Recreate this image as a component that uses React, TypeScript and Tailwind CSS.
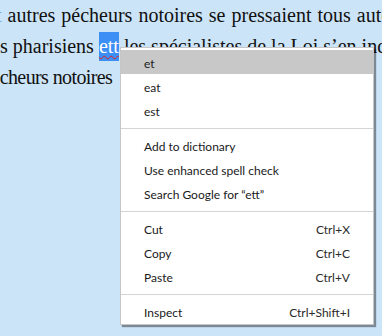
import React from "react";

const serif = { fontFamily: '"Liberation Serif", "Times New Roman", serif' };
const ui = { fontFamily: 'Lato, "Segoe UI", "Noto Sans", sans-serif' };

function Item({ label, shortcut, active }: { label: string; shortcut?: string; active?: boolean }) {
  return (
    <div
      className={`flex h-[24px] items-center justify-between px-[23px] pt-[3px] text-[12px] text-[#1a1a1a] ${
        active ? "bg-[#c8c8c8]" : ""
      }`}
    >
      <span>{label}</span>
      {shortcut && <span className="text-[#2a2a2a]">{shortcut}</span>}
    </div>
  );
}

function Sep() {
  return (
    <div className="flex h-[11px] items-center pt-[1px]">
      <div className="h-px w-full bg-[#d4d4d4]" />
    </div>
  );
}

export default function App() {
  return (
    <div className="relative h-[336px] w-[382px] overflow-hidden bg-[#cce4f7]">
      <div className="whitespace-nowrap text-[20px] leading-[31px] text-[#111]" style={serif}>
        <div className="ml-[-4px] [word-spacing:1px]">
          <span className="text-[#6aa6e6]">t</span> autres pécheurs notoires se pressaient tous autour
        </div>
        <div>
          s pharisiens{" "}
          <span className="inline-block h-[29px] bg-[#3d8ef5] leading-[29px] text-white underline decoration-wavy decoration-[#e02020] decoration-1 underline-offset-2">
            ett
          </span>{" "}
          les spécialistes de la Loi s’en indignaient
        </div>
        <div className="ml-[-18px] tracking-[-0.6px]">pécheurs notoires</div>
      </div>

      <div
        className="absolute left-[120px] top-[47px] w-[254px] border border-[#c6c6c6] bg-white pt-[2px] pb-[1px] shadow-[2px_2px_1px_rgba(0,0,0,0.4)]"
        style={ui}
      >
        <Item label="et" active />
        <Item label="eat" />
        <Item label="est" />
        <Sep />
        <Item label="Add to dictionary" />
        <Item label="Use enhanced spell check" />
        <Item label="Search Google for “ett”" />
        <Sep />
        <Item label="Cut" shortcut="Ctrl+X" />
        <Item label="Copy" shortcut="Ctrl+C" />
        <Item label="Paste" shortcut="Ctrl+V" />
        <Sep />
        <Item label="Inspect" shortcut="Ctrl+Shift+I" />
      </div>
    </div>
  );
}
